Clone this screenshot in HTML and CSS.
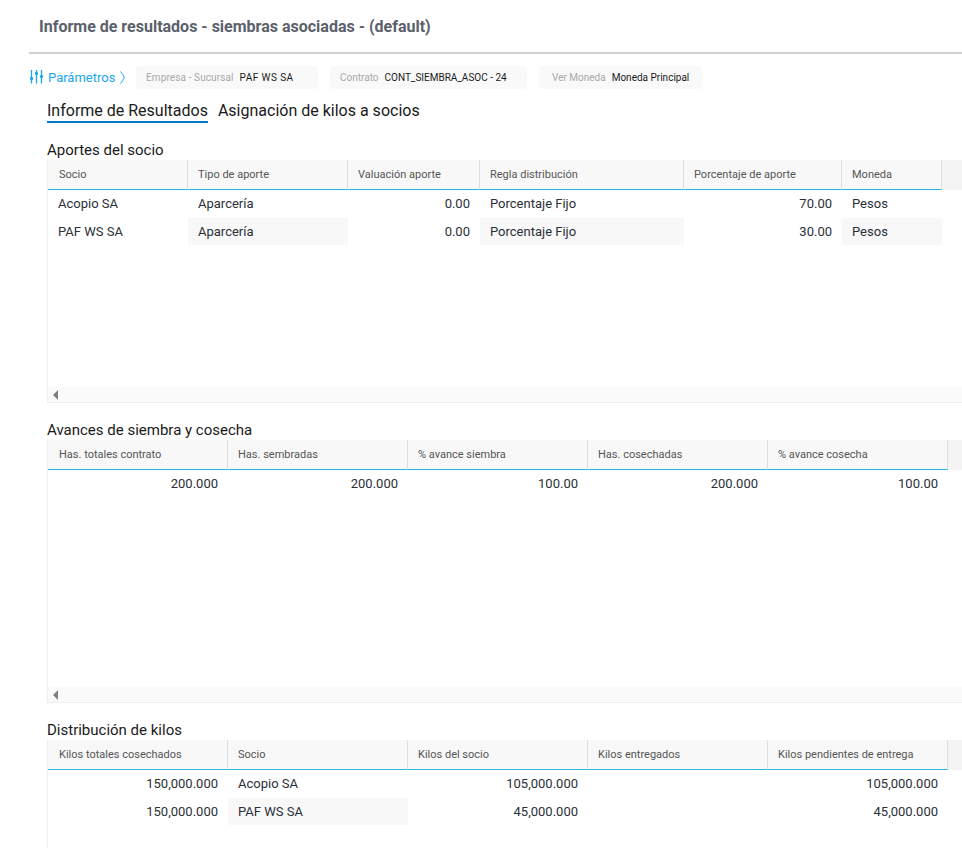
FILE: index.html
```html
<!DOCTYPE html>
<html lang="es">

<head>
    <meta charset="UTF-8">
    <meta name="viewport" content="width=device-width, initial-scale=1.0">
    <title>Informe de resultados</title>
    <link rel="stylesheet" href="styles.css">
</head>

<body>
    <div class="page-title">
        <h1>Informe de resultados - siembras asociadas - (default)</h1>
    </div>

    <div class="params">
        <a class="params-toggle">
            <svg class="params-icon" width="14" height="14" viewBox="0 0 14 14" fill="none" stroke="currentColor" stroke-width="1.3">
                <path d="M1.5 0V13.5M6.5 0V13.5M11.5 0V13.5" />
                <path d="M0 8.5H3M5 3.5H8M10 6.5H13" stroke-width="2.6" />
            </svg>
            <span>Parámetros</span>
            <svg class="params-chevron" width="5" height="13" viewBox="0 0 5 13" fill="none" stroke="currentColor" stroke-width="1">
                <path d="M0.5 0.5Q3 3.5 4.4 6.5Q3 9.5 0.5 12.5" />
            </svg>
        </a>
        <div class="chip chip-empresa"><span class="chip-label">Empresa - Sucursal</span><span class="chip-value">PAF WS SA</span></div>
        <div class="chip chip-contrato"><span class="chip-label">Contrato</span><span class="chip-value">CONT_SIEMBRA_ASOC - 24</span></div>
        <div class="chip chip-moneda"><span class="chip-label">Ver Moneda</span><span class="chip-value">Moneda Principal</span></div>
    </div>

    <div class="content">
        <div class="tabs">
            <div class="tab active">Informe de Resultados</div>
            <div class="tab">Asignación de kilos a socios</div>
        </div>

        <h2 class="section-title">Aportes del socio</h2>
        <div class="grid">
            <div class="grid-head cols-aportes">
                <div class="th">Socio</div>
                <div class="th">Tipo de aporte</div>
                <div class="th">Valuación aporte</div>
                <div class="th">Regla distribución</div>
                <div class="th">Porcentaje de aporte</div>
                <div class="th">Moneda</div>
                <div class="th-fill"></div>
            </div>
            <div class="grid-row cols-aportes">
                <div class="td">Acopio SA</div>
                <div class="td">Aparcería</div>
                <div class="td num">0.00</div>
                <div class="td">Porcentaje Fijo</div>
                <div class="td num">70.00</div>
                <div class="td">Pesos</div>
            </div>
            <div class="grid-row cols-aportes">
                <div class="td">PAF WS SA</div>
                <div class="td shaded">Aparcería</div>
                <div class="td num">0.00</div>
                <div class="td shaded">Porcentaje Fijo</div>
                <div class="td num">30.00</div>
                <div class="td shaded">Pesos</div>
            </div>
            <div class="grid-scroll"><span class="arrow-left"></span></div>
        </div>

        <h2 class="section-title">Avances de siembra y cosecha</h2>
        <div class="grid grid-tall">
            <div class="grid-head cols-even">
                <div class="th">Has. totales contrato</div>
                <div class="th">Has. sembradas</div>
                <div class="th">% avance siembra</div>
                <div class="th">Has. cosechadas</div>
                <div class="th">% avance cosecha</div>
                <div class="th-fill"></div>
            </div>
            <div class="grid-row cols-even">
                <div class="td num">200.000</div>
                <div class="td num">200.000</div>
                <div class="td num">100.00</div>
                <div class="td num">200.000</div>
                <div class="td num">100.00</div>
            </div>
            <div class="grid-scroll"><span class="arrow-left"></span></div>
        </div>

        <h2 class="section-title">Distribución de kilos</h2>
        <div class="grid">
            <div class="grid-head cols-even">
                <div class="th">Kilos totales cosechados</div>
                <div class="th">Socio</div>
                <div class="th">Kilos del socio</div>
                <div class="th">Kilos entregados</div>
                <div class="th">Kilos pendientes de entrega</div>
                <div class="th-fill"></div>
            </div>
            <div class="grid-row cols-even">
                <div class="td num">150,000.000</div>
                <div class="td">Acopio SA</div>
                <div class="td num">105,000.000</div>
                <div class="td num"></div>
                <div class="td num">105,000.000</div>
            </div>
            <div class="grid-row cols-even">
                <div class="td num">150,000.000</div>
                <div class="td shaded">PAF WS SA</div>
                <div class="td num">45,000.000</div>
                <div class="td num"></div>
                <div class="td num">45,000.000</div>
            </div>
            <div class="grid-scroll"><span class="arrow-left"></span></div>
        </div>
    </div>
</body>

</html>
```

FILE: styles.css
```css
html {
    overflow: hidden;
    height: 100%;
}

body {
    margin: 0;
    height: 100%;
    overflow: hidden;
    background: #fff;
    font-family: Roboto, Arial, sans-serif;
    color: #2b2f38;
}

.page-title {
    margin-left: 29px;
    height: 52px;
    padding-left: 10px;
    border-bottom: 2px solid #cfcfd2;
    display: flex;
    align-items: center;
}

.page-title h1 {
    margin: 0;
    font-size: 16px;
    font-weight: 700;
    color: #5b606b;
}

.params {
    display: flex;
    align-items: center;
    height: 24px;
    margin-top: 11px;
    padding-left: 30px;
}

.params-toggle {
    display: flex;
    align-items: center;
    color: #1ba6ee;
    font-size: 13px;
    width: 106px;
}

.params-icon {
    margin-right: 4px;
}

.params-chevron {
    margin-left: 5px;
}

.chip {
    display: flex;
    align-items: center;
    height: 23px;
    box-sizing: border-box;
    background: #f9f9f9;
    border-radius: 4px;
    font-size: 10px;
    margin-right: 12px;
}

.chip-empresa {
    width: 182px;
    padding-left: 10px;
}

.chip-empresa .chip-label {
    letter-spacing: 0.11px;
}

.chip-empresa .chip-value {
    letter-spacing: 0.45px;
}

.chip-contrato {
    width: 197px;
    padding-left: 10px;
}

.chip-moneda {
    width: 163px;
    padding-left: 13px;
}

.chip-label {
    color: #a8a8a8;
    margin-right: 6px;
}

.chip-value {
    color: #1a1a1a;
}

.content {
    margin-left: 47px;
}

.tabs {
    display: flex;
    gap: 10px;
    margin-top: 11px;
}

.tab {
    box-sizing: border-box;
    height: 23px;
    line-height: 22px;
    font-size: 16px;
    color: #1a1a1a;
}

.tab.active {
    border-bottom: 2px solid #0078c8;
}

.section-title {
    margin: 18px 0 0;
    height: 19px;
    line-height: 19px;
    font-size: 15px;
    font-weight: 400;
    color: #1a1a1a;
}

.grid {
    height: 243px;
    box-sizing: border-box;
    border-left: 1px solid #eeeeee;
    border-bottom: 1px solid #eeeeee;
    display: flex;
    flex-direction: column;
}

.grid-tall {
    height: 263px;
}

.cols-aportes {
    display: grid;
    grid-template-columns: 140px 160px 132px 204px 158px 100px 1fr;
}

.cols-even {
    display: grid;
    grid-template-columns: 180px 180px 180px 180px 180px 1fr;
}

.grid-head {
    height: 30px;
    flex-shrink: 0;
}

.th {
    box-sizing: border-box;
    height: 30px;
    line-height: 29px;
    padding-left: 10px;
    font-size: 11px;
    color: #555;
    background: #f8f8f8;
    border-right: 1px solid #dedede;
    border-bottom: 1px solid #29b9e0;
    white-space: nowrap;
}

.th:first-child {
    padding-left: 11px;
}

.th-fill {
    background: #f4f4f4;
}

.grid-row {
    height: 28px;
    flex-shrink: 0;
}

.td {
    box-sizing: border-box;
    height: 27px;
    line-height: 27px;
    padding: 0 10px;
    font-size: 13px;
    color: #2b2f38;
    white-space: nowrap;
}

.td.num {
    text-align: right;
}

.td.shaded {
    background: #f8f8f8;
}

.grid-scroll {
    margin-top: auto;
    height: 15px;
    background: #fafafa;
    display: flex;
    align-items: center;
    padding-left: 5px;
}

.arrow-left {
    width: 0;
    height: 0;
    border-top: 5px solid transparent;
    border-bottom: 5px solid transparent;
    border-right: 5px solid #7f7f7f;
}
```
